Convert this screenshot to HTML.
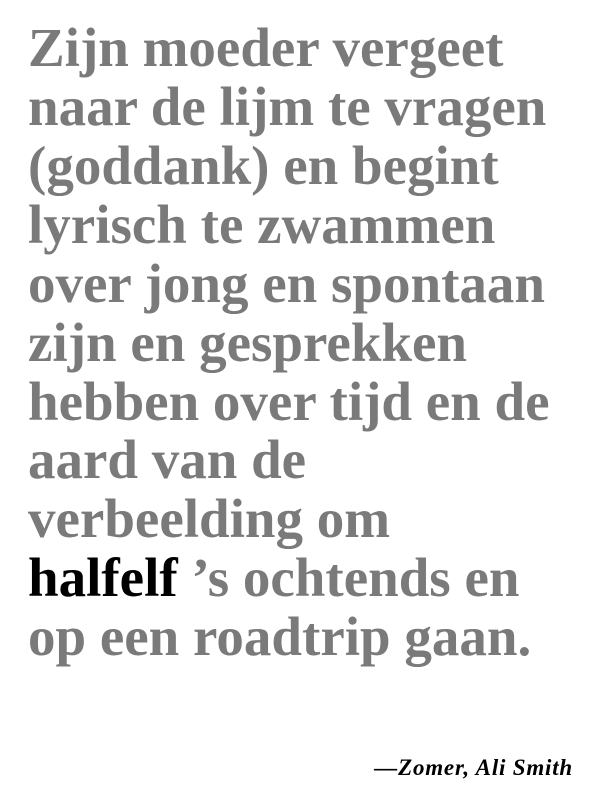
<!DOCTYPE html>
<html><head><meta charset="utf-8"><style>
html,body{margin:0;padding:0;background:#fff;width:600px;height:800px;overflow:hidden}
.t{position:absolute;left:28px;font-family:"Liberation Serif",serif;font-weight:bold;font-size:55px;color:#7a7a7a;white-space:nowrap;line-height:1}
.b{color:#000}
.a{position:absolute;right:27px;top:755px;font-family:"Liberation Serif",serif;font-weight:bold;font-style:italic;font-size:23px;letter-spacing:0.8px;color:#000;white-space:nowrap}
</style></head><body>
<div class="t" style="top:20px">Zijn moeder vergeet</div>
<div class="t" style="top:79px">naar de lijm te vragen</div>
<div class="t" style="top:138px">(goddank) en begint</div>
<div class="t" style="top:197px">lyrisch te zwammen</div>
<div class="t" style="top:256px">over jong en spontaan</div>
<div class="t" style="top:315px">zijn en gesprekken</div>
<div class="t" style="top:374px">hebben over tijd en de</div>
<div class="t" style="top:432px">aard van de</div>
<div class="t" style="top:491px">verbeelding om</div>
<div class="t" style="top:550px"><span class="b">halfelf</span> ’s ochtends en</div>
<div class="t" style="top:609px">op een roadtrip gaan.</div>
<div class="a">—Zomer, Ali Smith</div>
</body></html>
